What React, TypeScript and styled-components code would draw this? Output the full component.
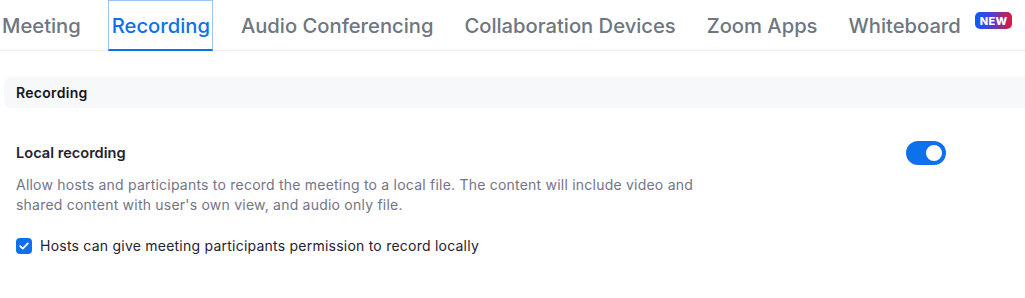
import React, { useState } from "react";
import styled, { createGlobalStyle } from "styled-components";

const GlobalStyle = createGlobalStyle`
  body {
    margin: 0;
    background: #ffffff;
    font-family: Inter, "Noto Sans", sans-serif;
  }
`;

const Page = styled.div`
  width: 1025px;
  height: 298px;
  overflow: hidden;
  background: #fff;
`;

const TabBar = styled.div`
  display: flex;
  align-items: stretch;
  gap: 24px;
  height: 50px;
  margin-left: -2px;
  border-bottom: 1px solid #ededf0;
  white-space: nowrap;
`;

const Tab = styled.div<{ $active?: boolean }>`
  display: flex;
  align-items: center;
  gap: 14px;
  padding: 0 2px 0 3px;
  font-size: 20.2px;
  font-weight: 500;
  color: ${(p) => (p.$active ? "#0e71eb" : "#6e7680")};
  border: 1px solid ${(p) => (p.$active ? "#9cc2f6" : "transparent")};
  border-bottom: 2px solid ${(p) => (p.$active ? "#0e71eb" : "transparent")};
  margin-bottom: -1px;
  cursor: pointer;
`;

const NewBadge = styled.span`
  display: inline-flex;
  align-items: center;
  justify-content: center;
  height: 17px;
  padding: 0 5px;
  margin-top: -9px;
  border-radius: 5px;
  background: linear-gradient(90deg, #0b5cff 0%, #4b3fd4 45%, #e4163e 100%);
  color: #fff;
  font-size: 11px;
  font-weight: 800;
  letter-spacing: 0.3px;
`;

const Content = styled.div`
  padding: 26px 0 0 4px;
`;

const SectionHeader = styled.div`
  display: flex;
  align-items: center;
  height: 31px;
  padding-left: 12px;
  background: #f7f8fa;
  border-radius: 8px 0 0 8px;
  font-size: 14px;
  font-weight: 600;
  letter-spacing: 0.3px;
  color: #131619;
`;

const Setting = styled.div`
  padding: 33px 0 0 12px;
`;

const SettingRow = styled.div`
  display: flex;
  align-items: center;
  justify-content: space-between;
  width: 930px;
`;

const SettingTitle = styled.div`
  font-size: 14.6px;
  font-weight: 600;
  color: #232333;
`;

const Toggle = styled.button<{ $on: boolean }>`
  position: relative;
  width: 40px;
  height: 24px;
  padding: 0;
  border: none;
  border-radius: 12px;
  background: ${(p) => (p.$on ? "#0e71eb" : "#bfc4ca")};
  cursor: pointer;
  &::after {
    content: "";
    position: absolute;
    top: 2px;
    left: ${(p) => (p.$on ? "18px" : "2px")};
    width: 16px;
    height: 16px;
    border-radius: 50%;
    background: #fff;
    border: 2px solid ${(p) => (p.$on ? "#0e71eb" : "#bfc4ca")};
  }
`;

const Description = styled.p`
  margin: 10px 0 0;
  width: 690px;
  font-size: 14px;
  letter-spacing: 0.22px;
  line-height: 20px;
  color: #747487;
`;

const CheckRow = styled.label`
  display: flex;
  align-items: center;
  gap: 8px;
  margin-top: 22px;
  font-size: 14px;
  letter-spacing: 0.23px;
  color: #232333;
  cursor: pointer;
`;

const Box = styled.span<{ $checked: boolean }>`
  display: inline-flex;
  align-items: center;
  justify-content: center;
  width: 16px;
  height: 16px;
  border-radius: 4px;
  background: ${(p) => (p.$checked ? "#0e71eb" : "#fff")};
  border: ${(p) => (p.$checked ? "none" : "1px solid #bfc4ca")};
`;

const tabs = [
  "Meeting",
  "Recording",
  "Audio Conferencing",
  "Collaboration Devices",
  "Zoom Apps",
  "Whiteboard",
];

export default function App() {
  const [active, setActive] = useState("Recording");
  const [localOn, setLocalOn] = useState(true);
  const [allowHosts, setAllowHosts] = useState(true);

  return (
    <Page>
      <GlobalStyle />
      <TabBar>
        {tabs.map((t) => (
          <Tab key={t} $active={active === t} onClick={() => setActive(t)}>
            {t}
            {t === "Whiteboard" && <NewBadge>NEW</NewBadge>}
          </Tab>
        ))}
      </TabBar>
      <Content>
        <SectionHeader>Recording</SectionHeader>
        <Setting>
          <SettingRow>
            <SettingTitle>Local recording</SettingTitle>
            <Toggle $on={localOn} onClick={() => setLocalOn(!localOn)} />
          </SettingRow>
          <Description>
            Allow hosts and participants to record the meeting to a local file.
            The content will include video and shared content with user's own
            view, and audio only file.
          </Description>
          <CheckRow onClick={() => setAllowHosts(!allowHosts)}>
            <Box $checked={allowHosts}>
              {allowHosts && (
                <svg width="10" height="8" viewBox="0 0 10 8" fill="none">
                  <path
                    d="M1.2 4.1 L3.8 6.6 L8.8 1.4"
                    stroke="#fff"
                    strokeWidth="1.8"
                    strokeLinecap="round"
                    strokeLinejoin="round"
                  />
                </svg>
              )}
            </Box>
            Hosts can give meeting participants permission to record locally
          </CheckRow>
        </Setting>
      </Content>
    </Page>
  );
}
